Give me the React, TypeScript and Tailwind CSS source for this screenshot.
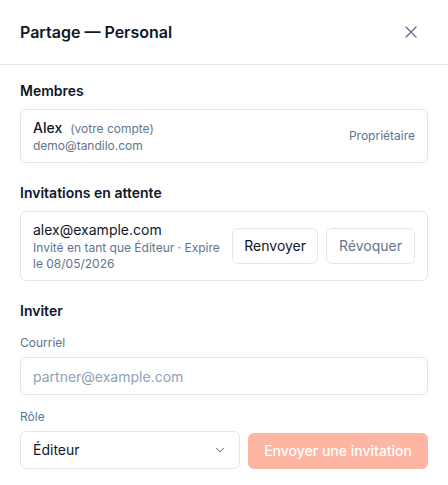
import React from "react";
import { X, ChevronDown } from "lucide-react";

export default function App() {
  return (
    <div
      className="w-[448px] min-h-[485px] bg-white text-slate-900"
      style={{ fontFamily: "Inter, 'Noto Sans', sans-serif" }}
    >
      <div className="flex h-[65px] items-center justify-between border-b border-[#e5e7eb] pl-5 pr-[21px]">
        <h2 className="text-base font-semibold leading-6 text-[#0f172a]">Partage — Personal</h2>
        <button className="flex h-8 w-8 items-center justify-center rounded-md text-slate-500">
          <X size={20} strokeWidth={1.6} />
        </button>
      </div>

      <div className="flex flex-col gap-5 px-5 pt-4 pb-4">
        <section>
          <h3 className="mb-2 text-sm font-semibold leading-5 text-[#0f172a]">Membres</h3>
          <div className="flex items-center justify-between rounded-md border border-[#e5e7eb] px-3 py-2">
            <div className="flex flex-col">
              <div className="flex items-baseline">
                <span className="text-sm font-medium leading-5 text-[#0f172a]">Alex</span>
                <span className="ml-2 text-xs leading-4 text-slate-500">(votre compte)</span>
              </div>
              <span className="text-xs leading-4 text-slate-500">demo@tandilo.com</span>
            </div>
            <span className="text-xs leading-4 text-slate-500">Propriétaire</span>
          </div>
        </section>

        <section>
          <h3 className="mb-2 text-sm font-semibold leading-5 text-[#0f172a]">Invitations en attente</h3>
          <div className="flex items-center gap-2 rounded-md border border-[#e5e7eb] px-3 py-2">
            <div className="min-w-0 flex-1 pr-0.5">
              <div className="text-sm leading-5 text-[#0f172a]">alex@example.com</div>
              <div className="text-xs leading-4 text-slate-500">
                Invité en tant que Éditeur · Expire le 08/05/2026
              </div>
            </div>
            <button className="h-9 rounded-md border border-[#e5e7eb] px-[11px] text-sm text-[#0f172a]">
              Renvoyer
            </button>
            <button className="h-9 rounded-md border border-[#e5e7eb] px-3 text-sm text-slate-500">
              Révoquer
            </button>
          </div>
        </section>

        <section>
          <h3 className="mb-3.5 text-sm font-semibold leading-5 text-[#0f172a]">Inviter</h3>
          <label className="mb-1.5 block text-xs leading-4 text-slate-500">Courriel</label>
          <input
            className="block h-[38px] w-full rounded-md border border-[#e5e7eb] px-3 text-sm text-[#0f172a] placeholder:text-slate-400 outline-none"
            placeholder="partner@example.com"
          />
          <label className="mt-[14px] mb-1.5 block text-xs leading-4 text-slate-500">Rôle</label>
          <div className="flex items-center gap-2">
            <div className="flex h-[38px] flex-1 items-center justify-between rounded-md border border-[#e5e7eb] pl-3 pr-3">
              <span className="text-sm text-[#0f172a]">Éditeur</span>
              <ChevronDown size={14} className="text-slate-500" strokeWidth={1.75} />
            </div>
            <button className="mt-0.5 h-9 rounded-md bg-[#feb5a2] px-4 text-sm font-medium text-white">
              Envoyer une invitation
            </button>
          </div>
        </section>
      </div>
    </div>
  );
}
